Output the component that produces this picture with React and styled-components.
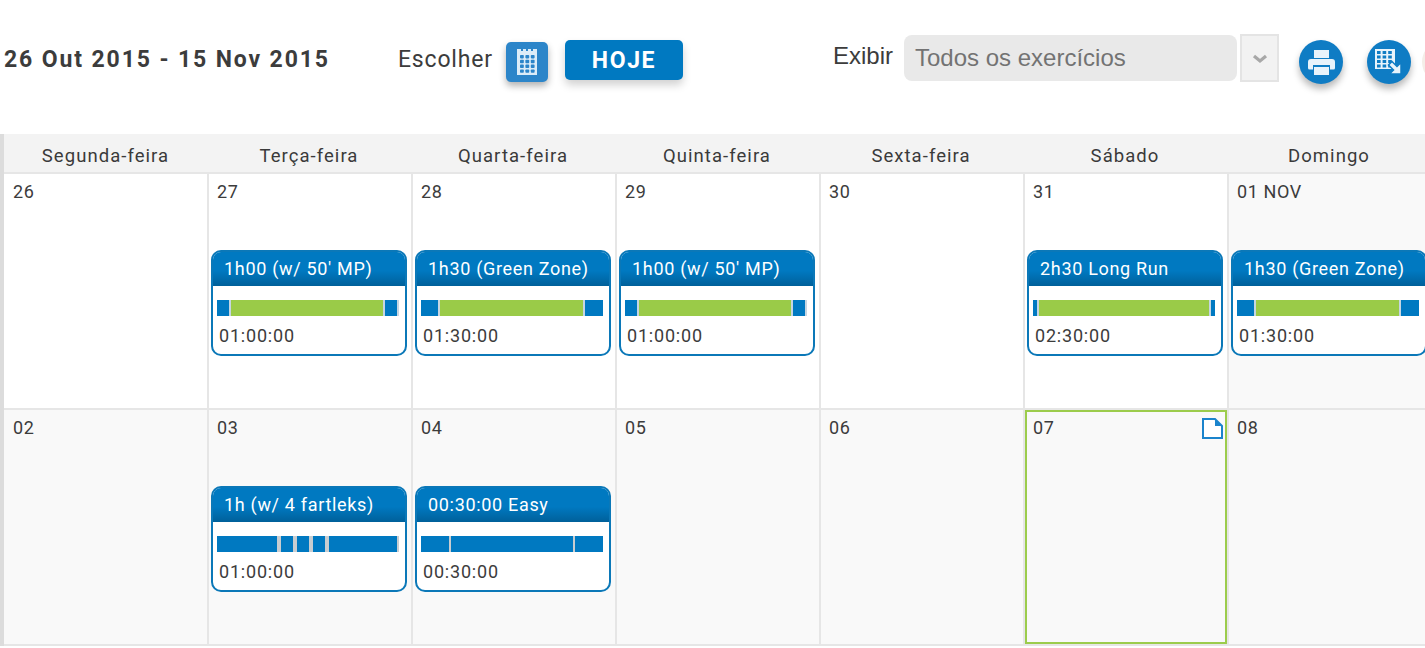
import React from 'react';
import styled, { createGlobalStyle } from 'styled-components';

const Global = createGlobalStyle`
    html, body {
        margin: 0;
        padding: 0;
        background: #fff;
        overflow: hidden;
    }
    * { box-sizing: border-box; }
`;

const din = `Roboto, "Liberation Sans", sans-serif`;
const blue = '#0079c1';
const columns = '203px repeat(6, 204px)';

const Page = styled.div`
    width: 1432px;
    height: 648px;
    overflow: hidden;
    font-family: ${din};
    color: #3c3c3c;
`;

const Toolbar = styled.div`
    height: 134px;
    padding: 34px 0 0 4px;
    display: flex;
    align-items: flex-start;
    & > * { flex: none; }
`;

const DateRange = styled.div`
    width: 394px;
    margin-top: 11px;
    font-size: 23px;
    line-height: 30px;
    font-weight: 700;
    letter-spacing: 1.88px;
    white-space: nowrap;
`;

const PickLabel = styled.div`
    width: 108px;
    margin-top: 11px;
    font-size: 23px;
    line-height: 30px;
    letter-spacing: 0.8px;
`;

const CalendarButton = styled.div`
    width: 42px;
    height: 40px;
    margin-top: 8px;
    border-radius: 5px;
    background: #2c85c9;
    box-shadow: 0 4px 7px rgba(0, 0, 0, 0.3);
    display: flex;
    align-items: center;
    justify-content: center;
`;

const TodayButton = styled.div`
    width: 118px;
    height: 40px;
    margin: 6px 150px 0 17px;
    border-radius: 5px;
    background: ${blue};
    color: #fff;
    box-shadow: 0 5px 9px rgba(0, 0, 0, 0.18);
    font-size: 23px;
    font-weight: 700;
    letter-spacing: 1.6px;
    display: flex;
    align-items: center;
    justify-content: center;
`;

const ShowLabel = styled.div`
    width: 71px;
    margin-top: 7px;
    font-family: "Liberation Sans", sans-serif;
    font-size: 24px;
    line-height: 30px;
`;

const SelectBox = styled.div`
    width: 333px;
    height: 46px;
    margin-top: 1px;
    padding-left: 11px;
    border-radius: 8px;
    background: #e9e9e9;
    color: #737373;
    font-family: "Liberation Sans", sans-serif;
    font-size: 24px;
    display: flex;
    align-items: center;
`;

const SelectArrow = styled.div`
    width: 39px;
    height: 48px;
    margin-left: 3px;
    padding-top: 2px;
    border: 2px solid #e4e4e4;
    background: #f2f2f2;
    display: flex;
    align-items: center;
    justify-content: center;
`;

const RoundButton = styled.div`
    width: 44px;
    height: 44px;
    margin: 6px 0 0 ${props => props.$gap}px;
    border-radius: 50%;
    background: ${props => (props.$faint ? '#f4eee8' : '#0f7cc4')};
    box-shadow: ${props => (props.$faint ? 'none' : '0 5px 7px rgba(0, 0, 0, 0.28)')};
    display: flex;
    align-items: center;
    justify-content: center;
`;

const Calendar = styled.div`
    border-left: 4px solid #dcdcdc;
`;

const WeekHeader = styled.div`
    height: 40px;
    display: grid;
    grid-template-columns: ${columns};
    background: #f3f3f3;
    border-bottom: 2px solid #e6e6e6;
`;

const DayName = styled.div`
    font-size: 18.5px;
    letter-spacing: 1.05px;
    line-height: 44px;
    text-align: center;
    color: #3a3a3a;
`;

const Week = styled.div`
    display: grid;
    grid-template-columns: ${columns};
    height: 236px;
    border-bottom: 2px solid #e6e6e6;
`;

const Day = styled.div`
    position: relative;
    height: 234px;
    padding: 6px 8px 0 ${props => (props.$first ? 7 : 8)}px;
    background: ${props => (props.$muted ? '#f9f9f9' : '#fff')};
    border-left: 2px solid ${props => (props.$first ? 'transparent' : '#e6e6e6')};
`;

const TodayFrame = styled.div`
    position: absolute;
    inset: 0;
    border: 2px solid #9ccc4c;
    pointer-events: none;
`;

const DayNumber = styled.div`
    font-size: 18px;
    line-height: 24px;
    letter-spacing: 0.6px;
    color: #3c3c3c;
`;

const NoteIcon = styled.svg`
    position: absolute;
    top: 8px;
    right: 4px;
`;

const Workout = styled.div`
    width: 196px;
    height: 106px;
    margin: 46px 0 0 -6px;
    border: 2px solid #0b78b8;
    border-radius: 10px;
    background: #fff;
    overflow: hidden;
`;

const WorkoutTitle = styled.div`
    height: 34px;
    padding-left: 11px;
    background: linear-gradient(to bottom, ${blue} 0%, ${blue} 55%, #00609a 100%);
    color: #fff;
    font-size: 18px;
    letter-spacing: 0.68px;
    line-height: 34px;
    white-space: nowrap;
`;

const Bar = styled.div`
    height: 16px;
    margin: 14px 6px 0 4px;
    background: ${props => props.$track};
    display: flex;
    gap: ${props => props.$gap}px;
`;

const Segment = styled.div`
    flex: none;
    width: ${props => props.$w}px;
    background: ${props => (props.$green ? '#9acb48' : blue)};
`;

const Duration = styled.div`
    margin: 9px 0 0 6px;
    font-size: 18px;
    line-height: 21px;
    letter-spacing: 0.8px;
    color: #3c3c3c;
`;

const CalendarIcon = () => (
    <svg width="22" height="28" viewBox="0 0 22 28">
        <path d="M1 1h4v2h2V1h3v2h2V1h3v2h2V1h4v26H1z" fill="#dcecf8" />
        {[0, 1, 2, 3].flatMap(r => [0, 1, 2].map(c => (
            <rect key={`${r}-${c}`} x={4 + c * 5.4} y={7 + r * 4.8} width="3.8" height="3.4" rx="0.8" fill="#2c85c9" />
        )))}
    </svg>
);

const PrintIcon = () => (
    <svg width="27" height="25" viewBox="0 0 27 25">
        <path d="M6 0h15v8H6z" fill="#e8f3fb" />
        <path d="M3 9h21a3 3 0 0 1 3 3v6a1.500 1.500 0 0 1-1.500 1.500H22V15H5v4.500H1.500A1.500 1.500 0 0 1 0 18v-6a3 3 0 0 1 3-3z" fill="#e8f3fb" />
        <path d="M6 17h15v8H6z" fill="#e8f3fb" />
    </svg>
);

const ExportIcon = () => (
    <svg width="28" height="26" viewBox="0 0 28 26">
        <path d="M0 0h20v20H0z" fill="#e8f3fb" />
        {[0, 1, 2, 3].flatMap(r => [0, 1, 2].map(c => (
            <rect key={`${r}-${c}`} x={2 + c * 5.6} y={2 + r * 4.5} width="3.6" height="3" fill="#0f7cc4" />
        )))}
        <path d="M26 25H14.500l4-4-5-5 3.500-3.500 5 5 4-4z" fill="#e8f3fb" stroke="#0f7cc4" strokeWidth="1.500" />
    </svg>
);

const days = ['Segunda-feira', 'Terça-feira', 'Quarta-feira', 'Quinta-feira', 'Sexta-feira', 'Sábado', 'Domingo'];

const easyTrack = '#c6d6e2';
const plainTrack = '#c9cdd0';

const mp = { title: "1h00 (w/ 50' MP)", time: '01:00:00', gap: 2, track: easyTrack, segs: [[12], [152, true], [12]] };
const green = { title: '1h30 (Green Zone)', time: '01:30:00', gap: 2, track: easyTrack, segs: [[17], [143, true], [18]] };

const weeks = [
    [
        { n: '26', first: true },
        { n: '27', workout: mp },
        { n: '28', workout: green },
        { n: '29', workout: mp },
        { n: '30' },
        { n: '31', workout: { title: '2h30 Long Run', time: '02:30:00', gap: 2, track: easyTrack, segs: [[4], [170, true], [4]] } },
        { n: '01 NOV', muted: true, workout: green },
    ],
    [
        { n: '02', muted: true, first: true },
        { n: '03', muted: true, workout: { title: '1h (w/ 4 fartleks)', time: '01:00:00', gap: 4, track: plainTrack, segs: [[60], [12], [12], [12], [68]] } },
        { n: '04', muted: true, workout: { title: '00:30:00 Easy', time: '00:30:00', gap: 2, track: plainTrack, segs: [[28], [122], [28]] } },
        { n: '05', muted: true },
        { n: '06', muted: true },
        { n: '07', muted: true, today: true },
        { n: '08', muted: true },
    ],
];

const App = () => {
    return (
        <Page>
            <Global />
            <Toolbar>
                <DateRange>26 Out 2015 - 15 Nov 2015</DateRange>
                <PickLabel>Escolher</PickLabel>
                <CalendarButton><CalendarIcon /></CalendarButton>
                <TodayButton>HOJE</TodayButton>
                <ShowLabel>Exibir</ShowLabel>
                <SelectBox>Todos os exercícios</SelectBox>
                <SelectArrow>
                    <svg width="16" height="10" viewBox="0 0 16 10">
                        <path d="M2 2l6 5 6-5" fill="none" stroke="#a8a8a8" strokeWidth="3.2" />
                    </svg>
                </SelectArrow>
                <RoundButton $gap={20}><PrintIcon /></RoundButton>
                <RoundButton $gap={24}><ExportIcon /></RoundButton>
                <RoundButton $gap={11} $faint />
            </Toolbar>
            <Calendar>
                <WeekHeader>
                    {days.map(d => <DayName key={d}>{d}</DayName>)}
                </WeekHeader>
                {weeks.map((week, i) => (
                    <Week key={i}>
                        {week.map(day => (
                            <Day key={day.n} $muted={day.muted} $first={day.first}>
                                <DayNumber>{day.n}</DayNumber>
                                {day.today && (
                                    <>
                                        <TodayFrame />
                                        <NoteIcon width="21" height="21" viewBox="0 0 21 21">
                                            <path d="M1 1h12l7 7v12H1z" fill="#fff" stroke="#1b84cc" strokeWidth="2" />
                                            <path d="M13 1v7h7" fill="#1b84cc" />
                                        </NoteIcon>
                                    </>
                                )}
                                {day.workout && (
                                    <Workout>
                                        <WorkoutTitle>{day.workout.title}</WorkoutTitle>
                                        <Bar $gap={day.workout.gap} $track={day.workout.track}>
                                            {day.workout.segs.map((s, j) => <Segment key={j} $w={s[0]} $green={s[1]} />)}
                                        </Bar>
                                        <Duration>{day.workout.time}</Duration>
                                    </Workout>
                                )}
                            </Day>
                        ))}
                    </Week>
                ))}
            </Calendar>
        </Page>
    );
};

export default App;
